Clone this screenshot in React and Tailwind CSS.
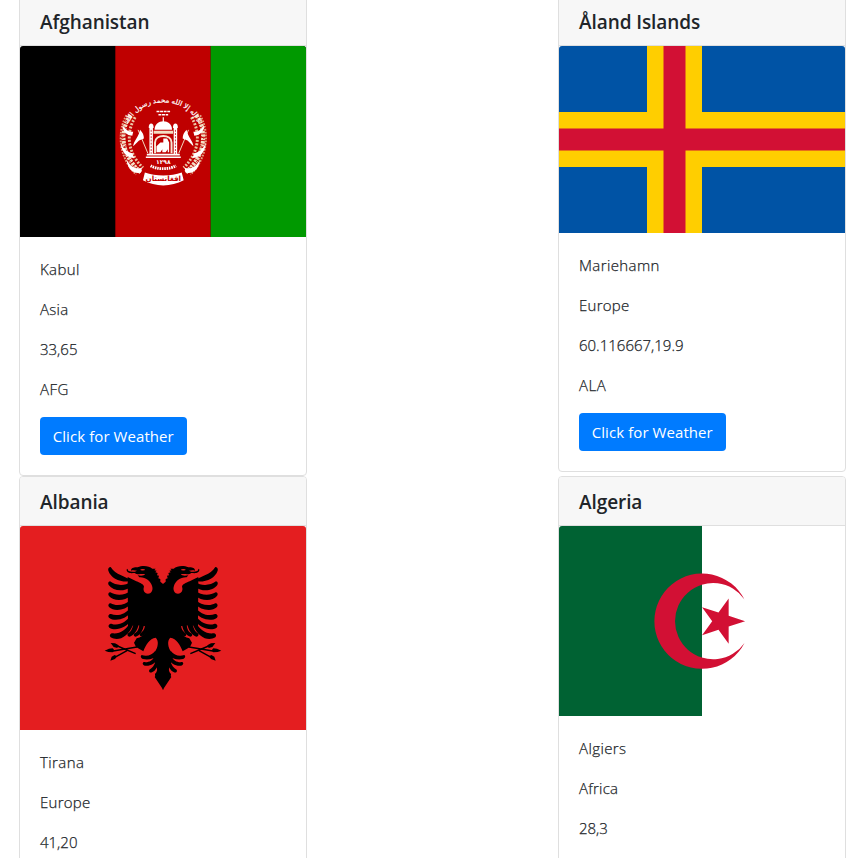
const WHEAT = [
  [-38, -20], [-41, -12], [-42, -3], [-41, 6], [-38, 14], [-33, 22], [-27, 29], [-34, -28],
];

function WreathSide() {
  return (
    <g>
      <path d="M-34 -27 C-46 -10 -43 15 -23 32" fill="none" stroke="#f3dfc4" strokeWidth="4.2" strokeDasharray="2.6 0.9" />
      <path d="M-29 -25 C-39 -9 -37 12 -21 27" fill="none" stroke="#ecc7a6" strokeWidth="3" strokeDasharray="2 1.5" />
      <path d="M-38 -27 C-48 -10 -46 17 -28 34" fill="none" stroke="#e3a284" strokeWidth="2" strokeDasharray="1.8 1.2" />
      {WHEAT.map(([x, y]) => (
        <path key={y} d={`M${x} ${y} l4 -3 M${x} ${y} l-3 -3`} stroke="#bf0000" strokeWidth="0.8" />
      ))}
      <path d="M-44 1 C-41 8 -37 11 -32 12 L-30 17 C-37 17 -43 12 -44 1Z" fill="#fff" />
      <path d="M-38 18 C-34 26 -29 29 -22 27 L-23 32 C-31 34 -37 28 -38 18Z" fill="#fff" />
      <path d="M-42 -17 C-39 -12 -36 -10 -31 -10 L-32 -6 C-39 -7 -42 -11 -42 -17Z" fill="#fff" />
      <path d="M-26 -12 L-16 12" stroke="#f3dfc4" strokeWidth="1" />
      <path d="M-24 -12 C-21 -9 -20 -6 -20 -3 L-25 -1 L-31 5 C-31 0 -25 -5 -24 -12Z" fill="#fff" />
      <path d="M-12.5 -14 V13" stroke="#fff" strokeWidth="3.6" />
      <path d="M-12.5 -12 V13" stroke="#bf0000" strokeWidth="0.8" strokeDasharray="2 1.3" />
      <path d="M-15 -14 C-15.5 -20 -9.5 -20 -10 -14Z" fill="#fff" />
    </g>
  );
}

function FlagAfghanistan() {
  return (
    <svg viewBox="0 0 286 191" className="block h-[191px] w-full rounded-t-[3px]">
      <rect width="286" height="191" fill="#000" />
      <rect x="95.33" width="95.34" height="191" fill="#bf0000" />
      <rect x="190.67" width="95.33" height="191" fill="#009900" />
      <defs>
        <path id="arc" d="M-35 -20 C-22 -47 22 -47 35 -20" />
      </defs>
      <g transform="translate(143.3 95.5) scale(0.97)">
        <WreathSide />
        <g transform="scale(-1 1)">
          <WreathSide />
        </g>
        <path d="M-9 -12 C-9.5 -24 9.5 -24 9 -12Z" fill="#fff" />
        <path d="M0 -25 V-19" stroke="#fff" strokeWidth="1.2" />
        <path d="M-10 -11 H10 V-8 H-10Z" fill="#f3dfc4" />
        <path d="M-8.5 12 V1 C-8.5 -8 8.5 -8 8.5 1 V12" fill="none" stroke="#f7e8d6" strokeWidth="2" />
        <path d="M-7 11 V5 L-3 1 H0 V-3 H4 L6 1 V11 H4.6 V8 L2.5 11 H-1 V8 L-3 11Z" fill="#fff" />
        <path d="M-17 13.5 H17 M-18 16.2 H18" stroke="#fff" strokeWidth="1.7" />
        <text textAnchor="middle" y="23" fontSize="6.2" fontWeight="700" fill="#fff" className="font-['DejaVu_Sans',sans-serif]">١٢٩٨</text>
        <path d="M-13 25 C-7 29 7 29 13 25" fill="none" stroke="#fff" strokeWidth="3" strokeDasharray="1.6 0.8" />
        <path d="M-19 32 C-8 36 8 36 19 32 L21 40 C8 47 -8 47 -21 40Z" fill="#fff" />
        <text textAnchor="middle" y="40.8" fontSize="7.4" fontWeight="700" fill="#bf0000" className="font-['DejaVu_Sans',sans-serif]">افغانستان</text>
        <text fontSize="7.2" fill="#fff" stroke="#fff" strokeWidth="0.2" className="font-['DejaVu_Sans',sans-serif]" textAnchor="middle">
          <textPath href="#arc" startOffset="50%">لا إله إلا الله محمد رسول الله</textPath>
        </text>
        <path d="M-7 -31 H7 M-5 -27.5 H5" stroke="#fff" strokeWidth="1.6" strokeDasharray="3 0.7" />
      </g>
    </svg>
  );
}

function FlagAland() {
  return (
    <svg viewBox="0 0 286 187" className="block h-[187px] w-full rounded-t-[3px]">
      <rect width="286" height="187" fill="#0053a5" />
      <path d="M88 0H143V66H286V121H143V187H88V121H0V66H88Z" fill="#ffce00" />
      <path d="M104.5 0H126.5V82.5H286V104.5H126.5V187H104.5V104.5H0V82.5H104.5Z" fill="#d21034" />
    </svg>
  );
}

function EagleHalf() {
  return (
    <g>
      <path d="M205 88 L196 80 L196 72 L190 70 L192 62 L186 61 L188 54 L181 52 L185 47 L178 46 L182 41 L172 41 C162 32 142 30 128 37 C118 36 108 38 108 47 C114 44 120 46 126 47 C118 52 108 51 101 48 C98 46 100 43 96 41 C93 46 96 52 104 54 C110 55 114 54 119 54 C126 61 142 55 150 58 C148 63 136 63 128 61 L133 67 C152 66 166 78 171 92 C176 106 168 116 159 116 C148 115 143 105 147 95 C146 88 136 84 124 79 L98 66 L99 215 L112 212 L130 211 L145 213 L160 214 L156 228 C148 240 136 248 125 250 L117 263 L123 276 L145 289 C152 270 164 250 182 248 C192 256 190 276 179 292 L172 304 L184 330 L188 352 L179 366 L205 405Z" />
      <path d="M105 74 C92 64 62 60 47 36 C42 36 38 41 40 47 C48 70 74 82 104 79Z" />
      <path d="M107 80 C90 94 62 92 45 79 C40 80 38 85 41 90 C54 108 86 112 107 96Z" />
      <path d="M107 108 C90 121 64 123 46 112 C40 112 38 118 42 123 C56 140 90 138 107 122Z" />
      <path d="M107 134 C92 149 66 156 47 145 C41 145 38 151 42 156 C58 172 92 165 107 148Z" />
      <path d="M107 158 C92 176 68 186 48 177 C41 177 38 183 42 188 C60 202 94 192 108 172Z" />
      <path d="M107 180 C94 202 70 214 49 206 C42 206 38 213 43 218 C62 230 94 218 109 196Z" />
      <path d="M104 204 C94 224 74 238 52 235 C46 235 42 242 47 247 C70 260 98 246 113 212Z" />
      <path d="M116 207 C112 222 107 230 101 234 C95 236 97 245 104 245 C117 241 127 226 131 209Z" />
      <path d="M133 207 C132 224 127 231 119 235 C114 238 116 245 122 245 C137 240 144 226 147 209Z" />
      <path d="M150 210 C149 224 143 230 137 234 C132 237 134 244 140 244 C151 240 158 232 163 214Z" />
      <path d="M181 287 C170 301 156 305 140 300 C135 304 138 310 144 312 C162 316 176 310 185 302Z" />
      <path d="M181 302 C172 318 160 323 146 321 C141 324 143 331 150 332 C167 334 180 324 187 314Z" />
      <path d="M182 318 C178 332 172 339 163 344 C160 350 165 354 171 352 C181 347 187 337 190 326Z" />
      <path d="M187 330 C188 342 187 350 180 357 C179 364 184 366 190 362 L198 340Z" />
      <path d="M126 276 L50 289 M122 296 L60 270 M96 287 L58 308" fill="none" stroke="#000" strokeWidth="4.5" />
      <path d="M29 287 L42 281 L53 280 L58 286 L53 292 L40 291Z M47 264 L60 265 L71 271 L67 279 L56 276Z M46 317 L50 305 L59 300 L66 304 L60 312Z" />
      <ellipse cx="143" cy="44" rx="7" ry="2.2" fill="#e41e20" />
    </g>
  );
}

function FlagAlbania() {
  return (
    <svg viewBox="0 0 286 204.29" className="block h-[204.29px] w-full rounded-t-[3px]">
      <rect width="286" height="204.29" fill="#e41e20" />
      <g transform="translate(75 29) scale(0.33333)">
        <EagleHalf />
        <g transform="translate(408 0) scale(-1 1)">
          <EagleHalf />
        </g>
      </g>
    </svg>
  );
}

function FlagAlgeria() {
  return (
    <svg viewBox="0 0 286 190" className="block h-[190px] w-full rounded-t-[3px]">
      <rect width="286" height="190" fill="#fff" />
      <rect width="143" height="190" fill="#006233" />
      <path
        fill="#d21034"
        d="M185.5 73.5A47.67 47.67 0 1 0 185.5 116.9A38.13 38.13 0 1 1 185.5 73.5Z M186.1 95.2L169.66 100.55V117.84L159.49 103.86L143.04 109.2L153.2 95.2L143.04 81.2L159.49 86.54L169.66 72.56V89.85Z"
      />
    </svg>
  );
}

const COUNTRIES = [
  { name: "Afghanistan", Flag: FlagAfghanistan, capital: "Kabul", region: "Asia", latlng: "33,65", code: "AFG" },
  { name: "Åland Islands", Flag: FlagAland, capital: "Mariehamn", region: "Europe", latlng: "60.116667,19.9", code: "ALA" },
  { name: "Albania", Flag: FlagAlbania, capital: "Tirana", region: "Europe", latlng: "41,20", code: "ALB" },
  { name: "Algeria", Flag: FlagAlgeria, capital: "Algiers", region: "Africa", latlng: "28,3", code: "DZA" },
];

function CountryCard({ name, Flag, capital, region, latlng, code }) {
  return (
    <div className="w-72 rounded border border-[#dfdfdf] bg-white">
      <div className="rounded-t-[3px] border-b border-[#dfdfdf] bg-[#f7f7f7] px-5 pt-[13px] pb-[11px]">
        <h5 className="text-[19px] leading-6 font-semibold tracking-[-0.08px]">{name}</h5>
      </div>
      <Flag />
      <div className="p-5">
        <div className="text-[15px] leading-6 font-light [-webkit-text-stroke:0.25px_#212529]">
          <p className="mb-4 tracking-[0.4px]">{capital}</p>
          <p className="mb-4 tracking-[0.25px]">{region}</p>
          <p className="mb-4">{latlng}</p>
          <p className="mb-4 tracking-[0.5px]">{code}</p>
        </div>
        <button className="block h-[38px] rounded bg-[#007bff] px-[12.7px] text-[15px] leading-6 tracking-[0.08px] whitespace-nowrap text-white">
          Click for Weather
        </button>
      </div>
    </div>
  );
}

export default function App() {
  return (
    <div className="h-[858px] overflow-hidden bg-white font-['Open_Sans','Noto_Sans',sans-serif] text-[#212529]">
      <div className="-mt-1 grid grid-cols-[288px_288px] items-start gap-x-[251px] pl-[19px]">
        {COUNTRIES.map((country) => (
          <CountryCard key={country.name} {...country} />
        ))}
      </div>
    </div>
  );
}
